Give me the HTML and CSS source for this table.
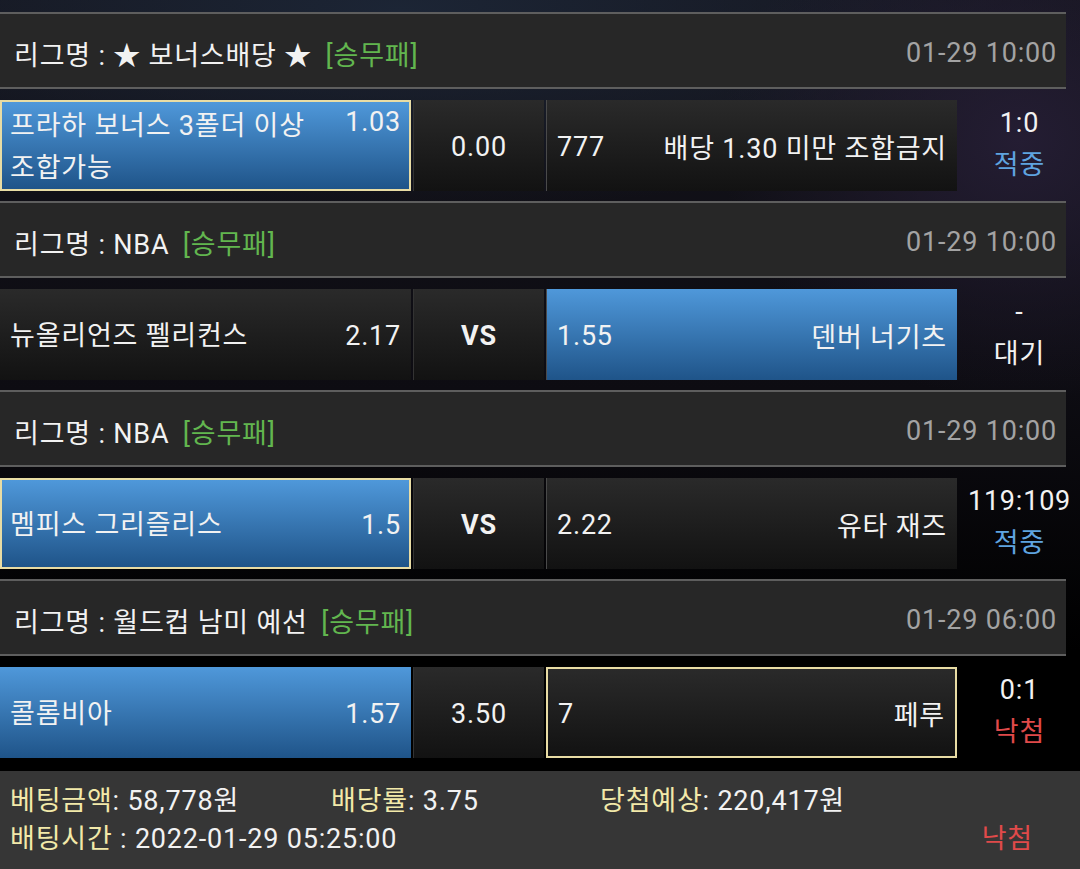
FILE: index.html
```html
<!DOCTYPE html>
<html lang="ko">
<head>
    <meta charset="UTF-8">
    <title>배팅내역</title>
    <link rel="stylesheet" href="styles.css">
</head>
<body>
    <div id="betslip">
        <div class="game">
            <div class="league">
                <span class="name">리그명 : ★ 보너스배당 ★ <em>[승무패]</em></span>
                <span class="date">01-29 10:00</span>
            </div>
            <div class="match">
                <div class="cell home pick picked">
                    <span class="team">프라하 보너스 3폴더 이상 조합가능</span>
                    <span class="odds top">1.03</span>
                </div>
                <div class="cell draw">0.00</div>
                <div class="cell away">
                    <span class="odds">777</span>
                    <span class="team">배당 1.30 미만 조합금지</span>
                </div>
                <div class="result">
                    <span>1:0</span>
                    <span class="win">적중</span>
                </div>
            </div>
        </div>

        <div class="game">
            <div class="league">
                <span class="name">리그명 : NBA <em>[승무패]</em></span>
                <span class="date">01-29 10:00</span>
            </div>
            <div class="match">
                <div class="cell home">
                    <span class="team">뉴올리언즈 펠리컨스</span>
                    <span class="odds">2.17</span>
                </div>
                <div class="cell draw vs">VS</div>
                <div class="cell away pick">
                    <span class="odds">1.55</span>
                    <span class="team">덴버 너기츠</span>
                </div>
                <div class="result">
                    <span>-</span>
                    <span>대기</span>
                </div>
            </div>
        </div>

        <div class="game">
            <div class="league">
                <span class="name">리그명 : NBA <em>[승무패]</em></span>
                <span class="date">01-29 10:00</span>
            </div>
            <div class="match">
                <div class="cell home pick picked">
                    <span class="team">멤피스 그리즐리스</span>
                    <span class="odds">1.5</span>
                </div>
                <div class="cell draw vs">VS</div>
                <div class="cell away">
                    <span class="odds">2.22</span>
                    <span class="team">유타 재즈</span>
                </div>
                <div class="result">
                    <span>119:109</span>
                    <span class="win">적중</span>
                </div>
            </div>
        </div>

        <div class="game">
            <div class="league">
                <span class="name">리그명 : 월드컵 남미 예선 <em>[승무패]</em></span>
                <span class="date">01-29 06:00</span>
            </div>
            <div class="match">
                <div class="cell home pick">
                    <span class="team">콜롬비아</span>
                    <span class="odds">1.57</span>
                </div>
                <div class="cell draw">3.50</div>
                <div class="cell away picked">
                    <span class="odds">7</span>
                    <span class="team">페루</span>
                </div>
                <div class="result">
                    <span>0:1</span>
                    <span class="lose">낙첨</span>
                </div>
            </div>
        </div>

        <div class="summary">
            <div class="row">
                <span class="item amount"><b>베팅금액</b>: 58,778원</span>
                <span class="item rate"><b>배당률</b>: 3.75</span>
                <span class="item expect"><b>당첨예상</b>: 220,417원</span>
            </div>
            <div class="row">
                <span class="item"><b>배팅시간</b> : 2022-01-29 05:25:00</span>
                <span class="state lose">낙첨</span>
            </div>
        </div>
    </div>
</body>
</html>
```

FILE: styles.css
```css
*{ margin: 0; padding: 0; box-sizing: border-box;}
body{
    width: 1080px;
    height: 869px;
    overflow: hidden;
    font-family: Roboto, "Noto Sans CJK KR", sans-serif;
    font-size: 27px;
    letter-spacing: 0.8px;
    color: #f2f2f2;
    background: #000;
    background-image:
        radial-gradient(ellipse 300px 260px at 1020px 140px, #241d33 0%, rgba(20,16,30,0) 100%),
        radial-gradient(ellipse 700px 200px at 400px 10px, #1c2535 0%, rgba(0,0,0,0) 100%),
        linear-gradient(#14141c 0%, #0d0c12 45%, #000 75%);
}
#betslip{
    padding-top: 12px;
}
.game{
    margin-bottom: 10px;
}
.league{
    display: flex;
    justify-content: space-between;
    align-items: center;
    width: 1066px;
    height: 77px;
    padding: 5px 9px 0 14px;
    background: #272727;
    border-top: 2px solid #5e5e5e;
    border-bottom: 2px solid #5e5e5e;
}
.league .name em{
    font-style: normal;
    color: #62b64f;
    margin-left: 6px;
}
.league .date{
    color: #a3a3a3;
}
.match{
    display: flex;
    gap: 2px;
    height: 91px;
    margin-top: 11px;
}
.cell{
    display: flex;
    align-items: center;
    justify-content: space-between;
    height: 100%;
    padding: 2px 10px 0;
    background: linear-gradient(#2a2a2a, #121212);
}
.home, .away{
    width: 411px;
}
.draw{
    width: 131px;
    justify-content: center;
    border-left: 1px solid #333;
}
.away{
    border-left: 1px solid #4a4a4a;
}
.vs{
    font-weight: bold;
}
.pick{
    background: linear-gradient(#4f98da, #1f5489);
}
.picked{
    border: 2px solid #e8dca4;
}
.home.picked{
    padding-left: 8px;
    padding-right: 8px;
}
.home .team{
    line-height: 42px;
    max-width: 320px;
}
.odds.top{
    align-self: flex-start;
    margin-top: 2px;
}
.result{
    flex: 1;
    display: flex;
    flex-direction: column;
    align-items: center;
    justify-content: center;
    line-height: 42px;
    padding-bottom: 4px;
}
.win{ color: #5fa4e0;}
.lose{ color: #e04a4a;}
.summary{
    margin-top: 13px;
    height: 98px;
    background: #363636;
    padding: 11px 47px 0 10px;
    line-height: 38px;
}
.summary .row{
    display: flex;
    justify-content: space-between;
}
.summary .row:first-child{
    justify-content: flex-start;
}
.summary b{
    font-weight: normal;
    color: #f2e9a9;
}
.summary .amount{ width: 321px;}
.summary .rate{ width: 269px;}
```
